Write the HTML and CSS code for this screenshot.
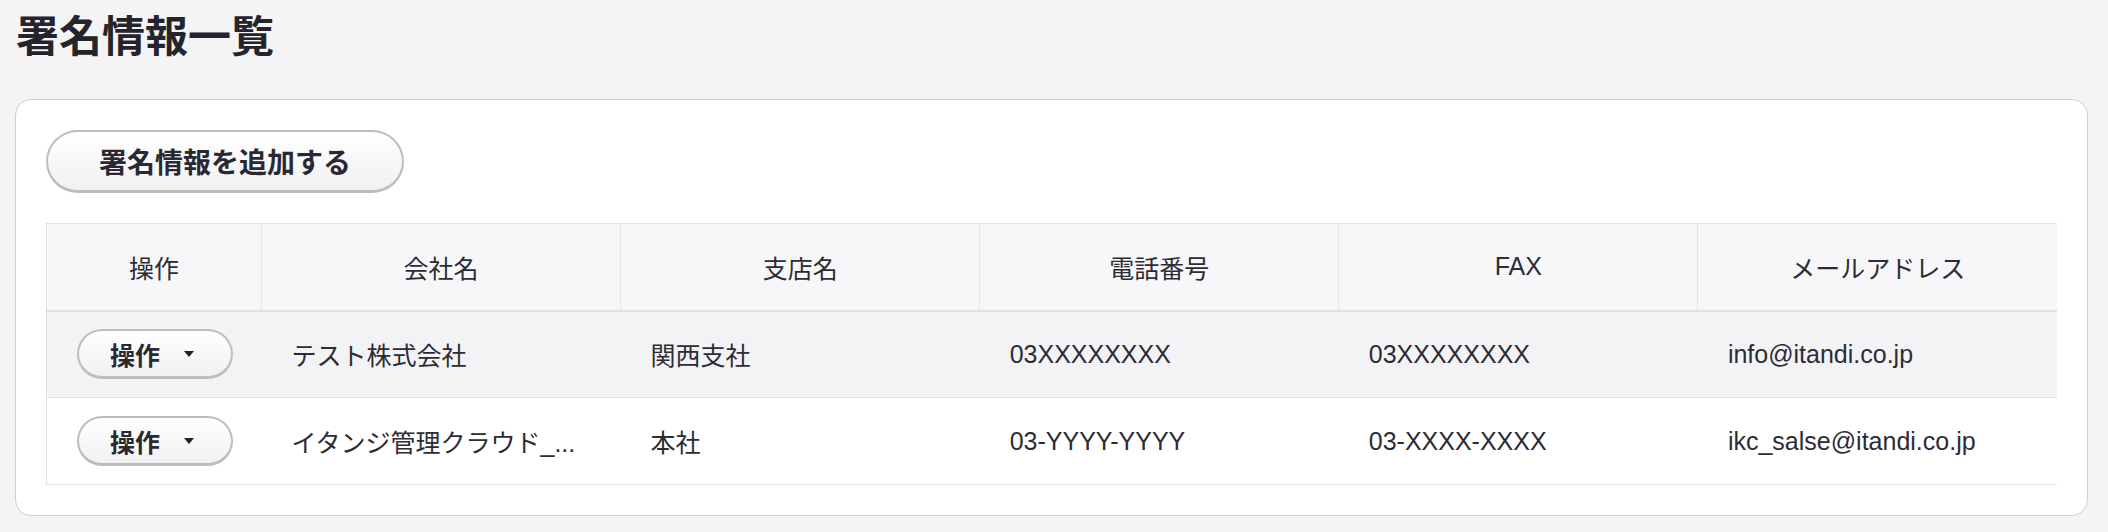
FILE: index.html
```html
<!DOCTYPE html>
<html lang="ja">
<head>
  <meta charset="UTF-8">
  <meta name="viewport" content="width=device-width, initial-scale=1.0">
  <title>署名情報一覧</title>
  <link rel="stylesheet" href="styles.css">
</head>
<body>

  <h1 class="page-title">署名情報一覧</h1>

  <!-- 署名情報カード -->
  <div class="card">
    <button class="btn btn-add" type="button">署名情報を追加する</button>

    <table class="sign-table">
      <thead>
        <tr>
          <th class="col-action">操作</th>
          <th>会社名</th>
          <th>支店名</th>
          <th>電話番号</th>
          <th>FAX</th>
          <th>メールアドレス</th>
        </tr>
      </thead>
      <tbody>
        <tr class="is-hover">
          <td><button class="btn btn-menu" type="button">操作<span class="caret"></span></button></td>
          <td>テスト株式会社</td>
          <td>関西支社</td>
          <td>03XXXXXXXX</td>
          <td>03XXXXXXXX</td>
          <td>info@itandi.co.jp</td>
        </tr>
        <tr>
          <td><button class="btn btn-menu" type="button">操作<span class="caret"></span></button></td>
          <td>イタンジ管理クラウド_...</td>
          <td>本社</td>
          <td>03-YYYY-YYYY</td>
          <td>03-XXXX-XXXX</td>
          <td>ikc_salse@itandi.co.jp</td>
        </tr>
      </tbody>
    </table>
  </div>

</body>
</html>
```

FILE: styles.css
```css
  * {
    box-sizing: border-box;
  }
  body, html {
    margin: 0;
    padding: 0;
  }
  body {
    padding: 11px 20px 0 15px;
    font-family: "Liberation Sans", "Noto Sans CJK JP", sans-serif;
    background-color: #f4f4f4;
    color: #2d2c35;
  }
  .page-title {
    margin: 0 0 36px 1px;
    font-size: 43px;
    line-height: 52px;
    font-weight: 700;
    color: #25242c;
  }
  .card {
    background: #fff;
    border: 1px solid #cfcfd1;
    border-radius: 16px;
    padding: 30px;
  }
  .btn {
    font-family: "Liberation Sans", "Noto Sans CJK JP", sans-serif;
    font-weight: 700;
    color: #2a2931;
    background: linear-gradient(#ffffff, #f1f1f4);
    border: 2px solid #bdbdc0;
    border-bottom-width: 3px;
    border-radius: 999px;
    cursor: pointer;
  }
  .btn-add {
    display: block;
    width: 358px;
    height: 63px;
    padding: 0;
    font-size: 28px;
    text-align: center;
  }
  .btn-menu {
    display: flex;
    align-items: center;
    width: 156px;
    height: 50px;
    padding: 0 0 0 31px;
    font-size: 25px;
  }
  .caret {
    margin-left: 24px;
    width: 0;
    height: 0;
    border-left: 5px solid transparent;
    border-right: 5px solid transparent;
    border-top: 6px solid #222;
  }
  .sign-table {
    width: 100%;
    margin-top: 30px;
    border-collapse: collapse;
    table-layout: fixed;
    border-top: 1px solid #e3e3e6;
    border-left: 1px solid #e3e3e6;
    font-size: 25px;
  }
  .sign-table th {
    height: 87px;
    padding: 0 30px;
    font-weight: 400;
    text-align: center;
    background: #f7f7f9;
    border-right: 1px solid #e6e6ea;
    border-bottom: 2px solid #e0e0e3;
    color: #2d2c35;
  }
  .sign-table th:last-child {
    border-right: none;
  }
  .sign-table .col-action {
    width: 215px;
  }
  .sign-table td {
    height: 87px;
    padding: 0 30px;
    border-bottom: 1px solid #e3e3e6;
    white-space: nowrap;
    overflow: hidden;
    text-overflow: ellipsis;
  }
  .sign-table tr.is-hover td {
    background: #f3f3f5;
  }
```
